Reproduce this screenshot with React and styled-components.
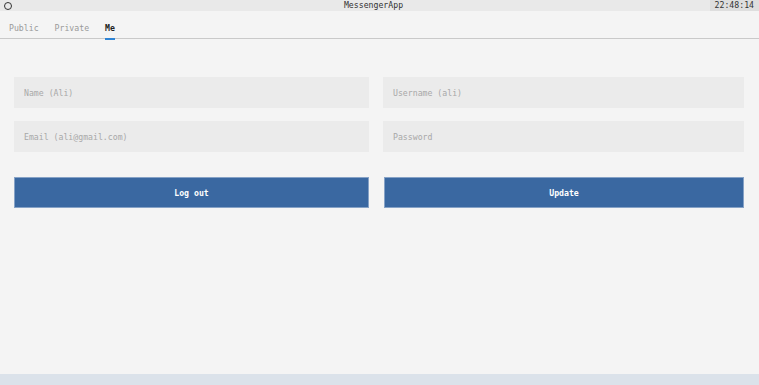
import React from "react";
import styled, { createGlobalStyle } from "styled-components";

const GlobalStyle = createGlobalStyle`
  html, body {
    margin: 0;
    padding: 0;
    background: #f4f4f4;
  }
  * {
    box-sizing: border-box;
  }
`;

const mono = `"DejaVu Sans Mono", "Liberation Mono", monospace`;

const Screen = styled.div`
  width: 759px;
  height: 385px;
  display: flex;
  flex-direction: column;
  background: #f4f4f4;
  font-family: ${mono};
  font-size: 8.2px;
  color: #333;
  overflow: hidden;
`;

const TopBar = styled.div`
  height: 11px;
  display: grid;
  grid-template-columns: 1fr auto 1fr;
  align-items: center;
  background: #e9e9e9;
`;

const Ring = styled.span`
  width: 8px;
  height: 8px;
  margin-left: 4px;
  border: 1.7px solid #333;
  border-radius: 50%;
`;

const Title = styled.span`
  color: #333;
  line-height: 11px;
  margin-right: 12px;
`;

const Clock = styled.span`
  justify-self: end;
  height: 11px;
  line-height: 11px;
  padding: 0 5px;
  background: #dedede;
  color: #333;
`;

const Tabs = styled.div`
  height: 28px;
  display: flex;
  align-items: stretch;
  gap: 16px;
  padding-left: 9px;
  border-bottom: 1.5px solid #c9c9c9;
`;

const Tab = styled.div`
  display: flex;
  align-items: center;
  padding-top: 6px;
  position: relative;
  color: ${(p) => (p.$active ? "#222" : "#9a9a9a")};
  font-weight: ${(p) => (p.$active ? "bold" : "normal")};

  &::after {
    content: "";
    display: ${(p) => (p.$active ? "block" : "none")};
    position: absolute;
    left: 0;
    right: 0;
    bottom: -2px;
    height: 2.5px;
    background: #2f84d4;
  }
`;

const Content = styled.div`
  flex: 1;
  padding: 38px 15px 0 14px;
  display: grid;
  grid-template-columns: 355fr 361fr;
  column-gap: 14px;
  row-gap: 13px;
  align-content: start;
`;

const Field = styled.input`
  height: 31px;
  width: 100%;
  border: none;
  outline: none;
  background: #ebebeb;
  padding: 0 10px;
  font-family: ${mono};
  font-size: 8.2px;
  color: #333;

  &::placeholder {
    color: #a8a8a8;
  }
`;

const Button = styled.button`
  height: 31px;
  margin-top: 12px;
  margin-left: ${(p) => p.$shift || "0"};
  border: 1px solid #86a2c6;
  background: #3a68a1;
  color: #fff;
  font-family: ${mono};
  font-size: 8.2px;
  font-weight: bold;
  cursor: pointer;
`;

const StatusBar = styled.div`
  height: 11px;
  background: #dbe2ea;
`;

export default function App() {
  return (
    <>
      <GlobalStyle />
      <Screen>
        <TopBar>
          <Ring />
          <Title>MessengerApp</Title>
          <Clock>22:48:14</Clock>
        </TopBar>
        <Tabs>
          <Tab>Public</Tab>
          <Tab>Private</Tab>
          <Tab $active>Me</Tab>
        </Tabs>
        <Content>
          <Field placeholder="Name (Ali)" />
          <Field placeholder="Username (ali)" />
          <Field placeholder="Email (ali@gmail.com)" />
          <Field type="password" placeholder="Password" />
          <Button>Log out</Button>
          <Button $shift="1px">Update</Button>
        </Content>
        <StatusBar />
      </Screen>
    </>
  );
}
